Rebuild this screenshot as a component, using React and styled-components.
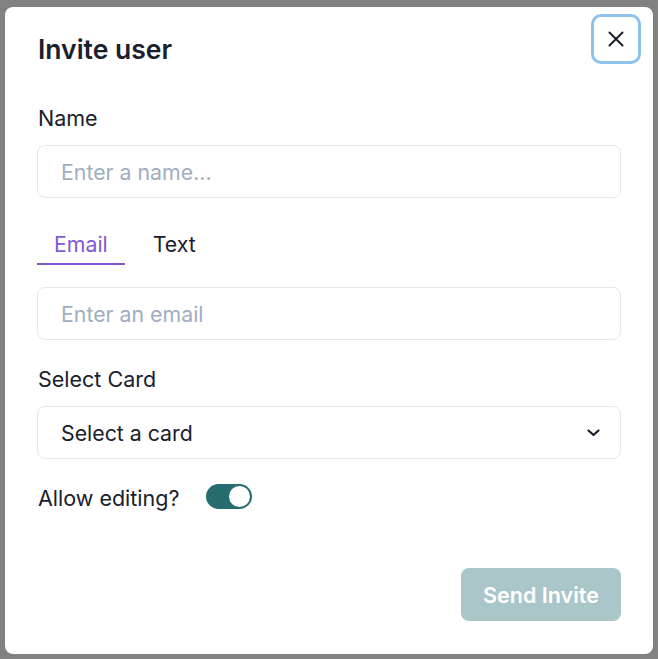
import React from "react";
import styled, { createGlobalStyle } from "styled-components";

const GlobalStyle = createGlobalStyle`
  html, body {
    margin: 0;
    padding: 0;
    background: #818181;
  }
  * {
    box-sizing: border-box;
  }
`;

export default function App() {
  const [tab, setTab] = React.useState("email");
  const [allow, setAllow] = React.useState(true);

  return (
    <Overlay>
      <GlobalStyle />
      <Modal>
        <Title>Invite user</Title>
        <CloseButton aria-label="Close">
          <svg width="16" height="16" viewBox="0 0 16 16" fill="none">
            <path
              d="M1.5 1.5l13 13M14.5 1.5l-13 13"
              stroke="#1a202c"
              strokeWidth="2"
              strokeLinecap="round"
            />
          </svg>
        </CloseButton>
        <Body>
          <Label>Name</Label>
          <Input placeholder="Enter a name..." />
          <TabList>
            <Tab active={tab === "email"} onClick={() => setTab("email")}>
              Email
            </Tab>
            <Tab active={tab === "text"} onClick={() => setTab("text")}>
              Text
            </Tab>
          </TabList>
          <Input placeholder="Enter an email" />
          <Label top={26}>Select Card</Label>
          <SelectBox>
            <span>Select a card</span>
            <svg width="13" height="8" viewBox="0 0 13 8" fill="none">
              <path
                d="M1.5 1.5L6.5 6l5-4.5"
                stroke="#1a202c"
                strokeWidth="2.2"
                strokeLinecap="round"
                strokeLinejoin="round"
              />
            </svg>
          </SelectBox>
          <SwitchRow>
            <SwitchLabel>Allow editing?</SwitchLabel>
            <Switch on={allow} onClick={() => setAllow(!allow)}>
              <Knob on={allow} />
            </Switch>
          </SwitchRow>
        </Body>
        <Footer>
          <SendButton disabled>Send Invite</SendButton>
        </Footer>
      </Modal>
    </Overlay>
  );
}

const Overlay = styled.div`
  width: 658px;
  height: 659px;
  padding: 7px 5px 5px 5px;
  font-family: Inter, "Noto Sans", sans-serif;
  color: #1a202c;
`;

const Modal = styled.div`
  position: relative;
  width: 648px;
  height: 647px;
  background: #fff;
  border-radius: 8px;
  display: flex;
  flex-direction: column;
`;

const Title = styled.h2`
  margin: 0;
  padding: 24px 33px 0;
  font-size: 26.5px;
  font-weight: 600;
  line-height: 36px;
  color: #1a202c;
`;

const CloseButton = styled.button`
  position: absolute;
  top: 10px;
  right: 15px;
  width: 44px;
  height: 44px;
  border: none;
  background: #fff;
  border-radius: 7px;
  box-shadow: 0 0 0 3px rgba(66, 153, 225, 0.6);
  display: flex;
  align-items: center;
  justify-content: center;
  padding: 0;
`;

const Body = styled.div`
  padding: 38px 32px 0;
  display: flex;
  flex-direction: column;
`;

const Label = styled.div`
  font-size: 21.5px;
  line-height: 26px;
  margin-top: ${p => p.top || 0}px;
  margin-bottom: 14px;
  padding-left: 1px;
  color: #1a202c;
`;

const Input = styled.input`
  width: 584px;
  height: 53px;
  border: 1px solid #e2e8f0;
  border-radius: 8px;
  padding: 0 23px;
  font-family: inherit;
  font-size: 21.3px;
  color: #1a202c;
  outline: none;
  &::placeholder {
    color: #a0aec0;
  }
`;

const TabList = styled.div`
  display: flex;
  gap: 11px;
  margin: 23px 0 22px;
`;

const Tab = styled.div`
  height: 44px;
  display: flex;
  align-items: center;
  padding: 4px 17px 0;
  font-size: 21.3px;
  color: ${p => (p.active ? "#805ad5" : "#1a202c")};
  border-bottom: 2px solid ${p => (p.active ? "#805ad5" : "transparent")};
  cursor: pointer;
`;

const SelectBox = styled.div`
  width: 584px;
  height: 53px;
  border: 1px solid #e2e8f0;
  border-radius: 8px;
  padding: 0 20px 0 23px;
  display: flex;
  align-items: center;
  justify-content: space-between;
  font-size: 21.3px;
  color: #1a202c;
`;

const SwitchRow = styled.div`
  display: flex;
  align-items: center;
  gap: 27px;
  margin-top: 23px;
  padding-left: 1px;
`;

const SwitchLabel = styled.span`
  font-size: 21.5px;
  line-height: 26px;
  padding-top: 3px;
`;

const Switch = styled.div`
  width: 46px;
  height: 25px;
  border-radius: 13px;
  background: ${p => (p.on ? "#276d6f" : "#cbd5e0")};
  padding: 2px;
  display: flex;
  justify-content: ${p => (p.on ? "flex-end" : "flex-start")};
  cursor: pointer;
`;

const Knob = styled.div`
  width: 21px;
  height: 21px;
  border-radius: 50%;
  background: #fff;
`;

const Footer = styled.div`
  margin-top: auto;
  padding: 0 32px 33px;
  display: flex;
  justify-content: flex-end;
`;

const SendButton = styled.button`
  width: 160px;
  height: 53px;
  border: none;
  border-radius: 8px;
  background: #aac6c8;
  color: #fff;
  font-family: inherit;
  font-size: 21.5px;
  font-weight: 600;
`;
